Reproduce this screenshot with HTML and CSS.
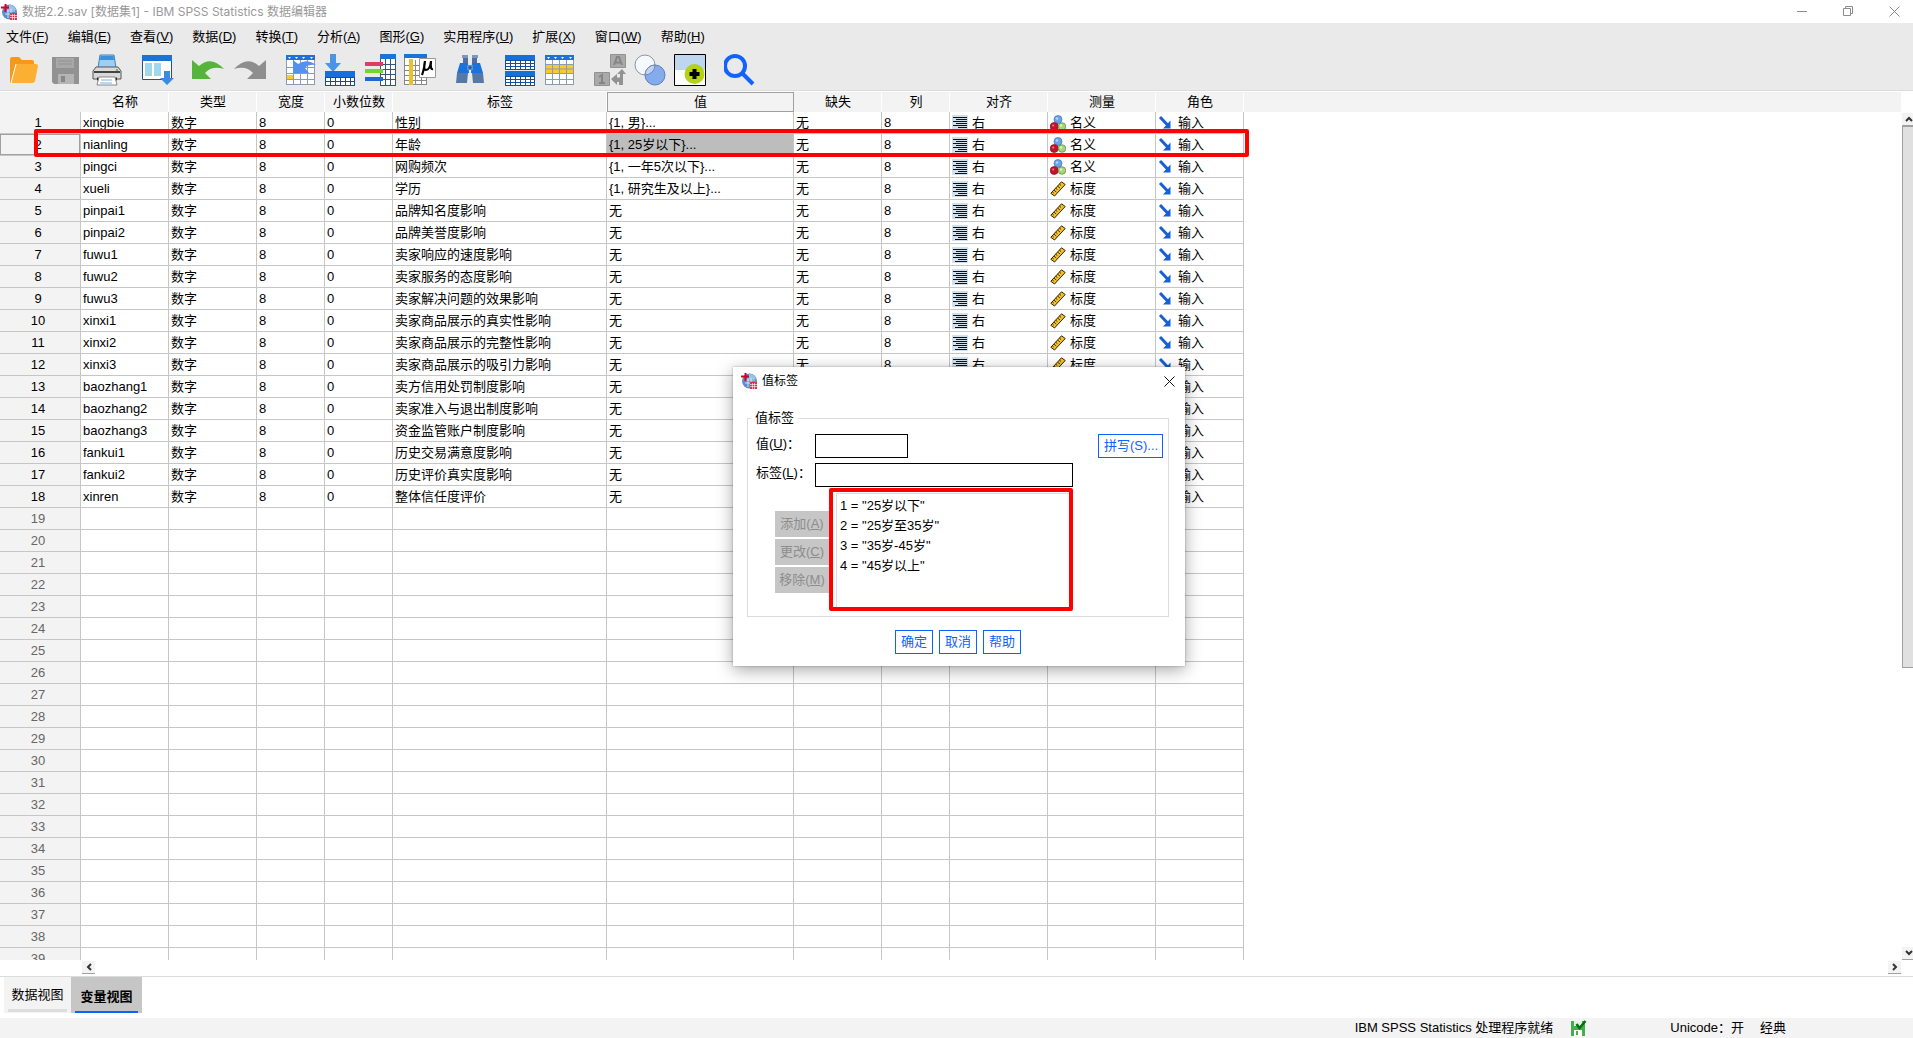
FILE: index.html
```html
<!DOCTYPE html>
<html lang="zh-CN">
<head>
<meta charset="utf-8">
<title>数据2.2.sav [数据集1] - IBM SPSS Statistics 数据编辑器</title>
<link rel="stylesheet" href="styles.css">
</head>
<body>
<svg class="sprite" aria-hidden="true">
  <symbol id="i-app" viewBox="0 0 16 16">
    <circle cx="8.500" cy="8" r="7.500" fill="#5b8fc7"/><path d="M8 1a7 7 0 0 1 7 5H8z" fill="#9cc3e6"/>
    <path d="M4 7h10M4 10h6M7 5v9M10 5v5" stroke="#fff" stroke-width=".7"/>
    <path d="M9 9h7v7H9z" fill="#d8324c"/><path d="M9 11.500h7M9 13.500h7M11.500 10v6M13.500 10v6" stroke="#fff" stroke-width=".6"/>
    <path d="M4.500 0v8M0 3.500h8" stroke="#d4002a" stroke-width="2"/>
  </symbol>
  <symbol id="i-align" viewBox="0 0 16 16">
    <path d="M0 0h16v16H0z" fill="#cfe0ee"/>
    <path d="M1 2.500h14M4 4.500h11M1 6.500h14M4 8.500h11M1 10.500h14M6 12.500h9M3 14.500h12" stroke="#111"/>
  </symbol>
  <symbol id="i-nominal" viewBox="0 0 16 16">
    <circle cx="8" cy="4.500" r="4" fill="#6ba3e8" stroke="#3f74b8" stroke-width=".7"/>
    <circle cx="4.200" cy="11.500" r="4" fill="#c4142c" stroke="#8e1020" stroke-width=".7"/>
    <circle cx="12" cy="11.500" r="3.800" fill="#a6d47c" stroke="#4f8a35" stroke-width=".7"/>
    <circle cx="7" cy="3.500" r="1.300" fill="#b5d5fa"/><circle cx="3.200" cy="10.500" r="1" fill="#ee8a92"/><circle cx="11" cy="10.500" r="1.200" fill="#dcf3c4"/>
  </symbol>
  <symbol id="i-scale" viewBox="0 0 16 16">
    <path d="M11.500 .8 15.200 3.500 4.500 15 .8 12.300z" fill="#f6c226" stroke="#2c2408" stroke-width="1"/>
    <path d="M9.500 3.200l1.600 1.300M7.700 5.200l2.300 1.800M5.800 7.300l1.600 1.300M4 9.200l2.300 1.800M2.400 11l1.400 1.100" stroke="#2c2408" stroke-width=".9"/>
  </symbol>
  <symbol id="i-input" viewBox="0 0 16 16">
    <path d="M2 2l8 8.500" stroke="#1560d8" stroke-width="3"/><path d="M12.500 5.500v8H5z" fill="#1560d8"/>
  </symbol>
</svg>

<header class="titlebar">
  <svg class="icon16"><use href="#i-app"/></svg>
  <h1 class="caption">数据2.2.sav [数据集1] - IBM SPSS Statistics 数据编辑器</h1>
  <div class="winbuttons">
    <button class="winbtn" aria-label="最小化"><svg viewBox="0 0 11 11"><path d="M0 5.500h10"/></svg></button>
    <button class="winbtn" aria-label="还原"><svg viewBox="0 0 11 11"><path d="M.5 2.500h7v7h-7zM2.500 2.500v-2h7v7h-2"/></svg></button>
    <button class="winbtn" aria-label="关闭"><svg viewBox="0 0 11 11"><path d="M.5.5l10 10M10.500.5l-10 10"/></svg></button>
  </div>
</header>

<div class="chrome">
  <nav class="menubar">
    <a href="#">文件(<u>F</u>)</a><a href="#">编辑(<u>E</u>)</a><a href="#">查看(<u>V</u>)</a><a href="#">数据(<u>D</u>)</a><a href="#">转换(<u>T</u>)</a><a href="#">分析(<u>A</u>)</a><a href="#">图形(<u>G</u>)</a><a href="#">实用程序(<u>U</u>)</a><a href="#">扩展(<u>X</u>)</a><a href="#">窗口(<u>W</u>)</a><a href="#">帮助(<u>H</u>)</a>
  </nav>
  <div class="toolbar" role="toolbar" aria-label="工具栏">
    <div class="group roomy">
      <button class="tool" aria-label="打开"><svg viewBox="0 0 32 32"><path d="M2 29V5q0-2 2-2h7l3 3h10q2 0 2 2v3z" fill="#f59a18"/><path d="M8 10h20q2 0 2 2l-3 15q-.5 2-3 2H3z" fill="#fbb034"/><path d="M8 10 3 29" stroke="#fff" stroke-width="1"/></svg></button>
      <button class="tool" aria-label="保存"><svg viewBox="0 0 32 32"><path d="M2 3h27v27H4l-2-2z" fill="#929292"/><path d="M6 4h18v10H6z" fill="#a8a8a8"/><path d="M8 7h14M8 10h14" stroke="#929292"/><path d="M8 20h16v10H8z" fill="#b4b4b4"/><path d="M11 22h4v6h-4z" fill="#888"/></svg></button>
      <button class="tool" aria-label="打印"><svg viewBox="0 0 32 32"><path d="M8 1h14l2 13H6z" fill="#9fd0f3" stroke="#3c83c0"/><path d="M8.500 2h13l.5 4H8z" fill="#3d8fd8"/><path d="M4 13h22l3 4v8H1v-8z" fill="#d9d9d9" stroke="#555"/><path d="M2 18h26" stroke="#444" stroke-width="2"/><path d="M5 25h20" stroke="#222" stroke-width="3"/><path d="M7 23h16l2 8H5z" fill="#fff" stroke="#888"/><path d="M9 26h11M8 29h12" stroke="#7fb2e0"/><circle cx="25" cy="16" r="1" fill="#2fbb2f"/></svg></button>
    </div>
    <div class="group">
      <button class="tool" aria-label="重新调用对话框"><svg viewBox="0 0 32 32"><path d="M.5 1.500h29v24H.5z" fill="#fff" stroke="#2c4f7c"/><path d="M0 1h30v6H0z" fill="#1b72d8"/><path d="M3 9h7v13H3zM12 9h7v13h-7z" fill="#9fd8ee"/><path d="M22 17h6v7h4l-7 7-7-7h4z" fill="#3b8be0"/></svg></button>
    </div>
    <div class="group roomy">
      <button class="tool" aria-label="撤消"><svg viewBox="0 0 32 32"><path d="M0 6l7 6Q19 1 32 15 20 11 13 19l6 6H0z" fill="#55b53b"/></svg></button>
      <button class="tool" aria-label="重做"><svg viewBox="0 0 32 32"><path d="M32 6l-7 6Q13 1 0 15q12-4 19 4l-6 6h19z" fill="#8e8e8e"/></svg></button>
    </div>
    <div class="group">
      <button class="tool" aria-label="转到个案"><svg viewBox="0 0 32 32"><path d="M2 2h29v29H2z" fill="#fff"/><path d="M2 13.500h29M2 19.500h29M2 25.500h29M9.500 6v25M16.500 6v25M23.500 6v25M2.500 2v29M30.500 2v29M2 30.500h29" stroke="#8b9bb2" fill="none"/><path d="M2 1h29v5H2z" fill="#1b72d8"/><path d="M4 3h3l-1.500 2zM11 3h3l-1.500 2zM18 3h3l-1.500 2zM26 3h3l-1.500 2z" fill="#fff"/><path d="M3 21h6v4H3z" fill="#f5cc2a"/><path d="M9 6l5 4q9-6 18 1-8-1-11 3l4 5H9z" fill="#5590ee"/></svg></button>
      <button class="tool" aria-label="转到变量"><svg viewBox="0 0 32 32"><path d="M6 0h6v9h5l-8 9-8-9h5z" fill="#4c94e6"/><path d="M1 17h30v15H1z" fill="#134f9a"/><path d="M1 17h30v6H1z" fill="#1670dc"/><path d="M2 24h28v7H2z" fill="#fff"/><path d="M2 27.500h28M6.500 24v7M11.500 24v7M16.500 24v7M21.500 24v7M26.500 24v7" stroke="#134f9a"/><path d="M4 14l5 4 5-4-5 4z" fill="#4c94e6"/></svg></button>
      <button class="tool" aria-label="变量"><svg viewBox="0 0 32 32"><path d="M16 0h16v32H16z" fill="#fff"/><path d="M16.500 5v27M21.500 5v27M26.500 5v27M31.500 0v32M16 10.500h16M16 15.500h16M16 20.500h16M16 25.500h16M16 31.500h16" stroke="#35557e" fill="none"/><path d="M16 0h16v5H16z" fill="#1b72d8"/><path d="M1 8h18v4H1z" fill="#e03c62"/><path d="M1 15h18v4H1z" fill="#76d42c"/><path d="M1 23h18v4H1z" fill="#2167d2"/></svg></button>
      <button class="tool" aria-label="描述统计"><svg viewBox="0 0 32 32"><path d="M0 1h23v30H0z" fill="#fff"/><path d="M0 11.500h23M0 16.500h23M0 21.500h23M0 26.500h23M.5 1v30M11.500 6v25M17.500 6v25M22.500 1v30M0 30.500h23" stroke="#888" fill="none"/><path d="M5 5h4v26H5z" fill="#ecc028"/><path d="M0 0h23v4H0z" fill="#1b72d8"/><path d="M15.500 4.500h16v19h-16z" fill="#fff" stroke="#999"/><path d="M21 7q-1 9-3 14M21 7q-2 9 1 9 4 0 5-9-1 9 2 8" stroke="#000" stroke-width="2.200" fill="none"/></svg></button>
    </div>
    <div class="group">
      <button class="tool" aria-label="查找"><svg viewBox="0 0 32 32"><path d="M8 1h6v3H8zM18 1h6v3h-6z" fill="#8197b8"/><path d="M9 4h5v5H9zM18 4h5v5h-5z" fill="#4c70a4"/><path d="M6 9h8l1 9v1H3zM18 9h8l3 10H17v-1z" fill="#1b72dc"/><path d="M13 11h6v5h-6z" fill="#5a8fd0"/><circle cx="16" cy="13.500" r="1.500" fill="#2b5b9c"/><path d="M3 19h11l-1 10H2zM18 19h11l1 10H19z" fill="#5578a8"/></svg></button>
    </div>
    <div class="group">
      <button class="tool" aria-label="拆分文件"><svg viewBox="0 0 32 32"><path d="M1 1h30v15H1zM1 17h30v15H1z" fill="#134f9a"/><path d="M1 1h30v5H1zM1 17h30v5H1z" fill="#1670dc"/><path d="M2 7h28v8H2zM2 23h28v8H2z" fill="#fff"/><path d="M2 9.500h28M2 12.500h28M2 25.500h28M2 28.500h28M6.500 7v8M11.500 7v8M16.500 7v8M21.500 7v8M26.500 7v8M6.500 23v8M11.500 23v8M16.500 23v8M21.500 23v8M26.500 23v8" stroke="#134f9a"/></svg></button>
      <button class="tool" aria-label="选择个案"><svg viewBox="0 0 32 32"><path d="M1 1h29v30H1z" fill="#fff"/><path d="M1 10h29v9H1z" fill="#f5cc2a"/><path d="M1 10.500h29M1 15h29M1 19.500h29M1 25.500h29M8.500 6v25M15.500 6v25M22.500 6v25M1.500 2v29M29.500 2v29M1 30.500h29" stroke="#8b9bb2" fill="none"/><path d="M1 1h29v5H1z" fill="#1b72d8"/><path d="M3 3h3l-1.500 2zM10 3h3l-1.500 2zM17 3h3l-1.500 2zM25 3h3l-1.500 2z" fill="#fff"/></svg></button>
    </div>
    <div class="group">
      <button class="tool" aria-label="值标签"><svg viewBox="0 0 32 32"><path d="M16.500.5h15v13h-15zM.5 18.500h15v13H.5z" fill="#a9a9a9" stroke="#929292"/><path d="M20 11l3-8h2l3 8M21.500 8.500h5" stroke="#858585" stroke-width="2" fill="none"/><path d="M5 23l3-2v8M5 29h6" stroke="#858585" stroke-width="2" fill="none"/><path d="M17 25l6-5v3.500h3V20h-3l5-5 4 5h-3v11h-4v-3h-2v3z" fill="#929292"/></svg></button>
      <button class="tool" aria-label="使用变量集"><svg viewBox="0 0 32 32"><circle cx="11" cy="11" r="10" fill="#f5f8fd" stroke="#8c95a5"/><circle cx="21" cy="21" r="10" fill="#85abef" stroke="#5e7db0"/><path d="M11 21a10 10 0 0 1 10-10 10 10 0 0 1-10 10z" fill="#c0d2f5" stroke="#7588aa"/></svg></button>
      <button class="tool" aria-label="定制工具栏"><svg viewBox="0 0 32 32"><path d="M.5.5h31v31H.5z" fill="#fff" stroke="#000"/><path d="M1 1h30v15H1z" fill="#bfd6f0"/><circle cx="20.500" cy="20" r="10" fill="#b5d217"/><path d="M20.500 15v10M15.500 20h10" stroke="#000" stroke-width="4"/></svg></button>
    </div>
    <div class="group">
      <button class="tool" aria-label="搜索"><svg viewBox="0 0 32 32"><circle cx="11" cy="12" r="10" fill="none" stroke="#1163fb" stroke-width="4"/><path d="M18 19l11 11" stroke="#1163fb" stroke-width="4"/></svg></button>
    </div>
  </div>
</div>

<main class="editor">
  <div class="gridwrap">
    <table class="grid">
      <colgroup><col class="c-num"><col class="c-88"><col class="c-88"><col class="c-68"><col class="c-68"><col class="c-label"><col class="c-values"><col class="c-88"><col class="c-68"><col class="c-align"><col class="c-measure"><col class="c-88"><col></colgroup>
      <thead><tr><th></th><th>名称</th><th>类型</th><th>宽度</th><th>小数位数</th><th>标签</th><th class="current">值</th><th>缺失</th><th>列</th><th>对齐</th><th>测量</th><th>角色</th><th></th></tr></thead>
      <tbody id="variables"></tbody>
    </table>
    <div class="mark mark-row"></div>
  </div>
  <div class="vscroll">
    <button class="arrow" aria-label="向上滚动"><svg viewBox="0 0 8 8"><path d="M1 6l3-3 3 3"/></svg></button>
    <div class="track"><div class="thumb"></div></div>
    <button class="arrow" aria-label="向下滚动"><svg viewBox="0 0 8 8"><path d="M1 2l3 3 3-3"/></svg></button>
  </div>
</main>
<div class="hscroll">
  <button class="arrow" aria-label="向左滚动"><svg viewBox="0 0 8 8"><path d="M6 1L3 4l3 3"/></svg></button>
  <button class="arrow" aria-label="向右滚动"><svg viewBox="0 0 8 8"><path d="M2 1l3 3-3 3"/></svg></button>
</div>
<div class="tabs" role="tablist">
  <button class="tab" role="tab" aria-selected="false"><span>数据视图</span></button>
  <button class="tab active" role="tab" aria-selected="true"><span>变量视图</span></button>
</div>
<footer class="status">
  <span class="st-main">IBM SPSS Statistics 处理程序就绪</span>
  <svg class="st-icon" viewBox="0 0 16 16"><path d="M0 1h14v15H0z" fill="#46ae4c"/><path d="M3 1h8v5H3z" fill="#e4f3e4"/><path d="M3 10h8v6H3z" fill="#fff"/><path d="M5 11h2v4H5z" fill="#46ae4c"/><path d="M5.500 4l3 4 6-7" fill="none" stroke="#0c6c12" stroke-width="2.500"/></svg>
  <span class="st-unicode">Unicode：开</span>
  <span>经典</span>
</footer>

<section class="dialog" role="dialog" aria-labelledby="dlg-title">
  <div class="dlg-head">
    <svg class="icon16"><use href="#i-app"/></svg>
    <h2 class="dlg-title" id="dlg-title">值标签</h2>
    <button class="dlg-close" aria-label="关闭"><svg viewBox="0 0 11 11"><path d="M.5.5l10 10M10.500.5l-10 10"/></svg></button>
  </div>
  <fieldset class="box">
    <legend>值标签</legend>
    <div class="field">
      <label for="val">值(<u>U</u>)：</label><input id="val" class="in-value" type="text">
      <button class="btn spell">拼写(S)...</button>
    </div>
    <div class="field">
      <label for="lab">标签(<u>L</u>)：</label><input id="lab" class="in-label" type="text">
    </div>
    <div class="entries">
      <div class="edits">
        <button class="edit" disabled>添加(<u>A</u>)</button>
        <button class="edit" disabled>更改(<u>C</u>)</button>
        <button class="edit" disabled>移除(<u>M</u>)</button>
      </div>
      <div class="listbox">
        <select class="list" size="5" aria-label="值标签列表">
          <option>1 = "25岁以下"</option><option>2 = "25岁至35岁"</option><option>3 = "35岁-45岁"</option><option>4 = "45岁以上"</option>
        </select>
        <div class="mark mark-list"></div>
      </div>
    </div>
  </fieldset>
  <div class="dlg-foot">
    <button class="btn">确定</button><button class="btn">取消</button><button class="btn">帮助</button>
  </div>
</section>
<script src="variables.js"></script>
</body>
</html>
```
FILE: styles.css
```css
* { box-sizing: border-box; }
body, button, input, select, table { font: 13px/20px "Liberation Sans", "Noto Sans CJK SC", sans-serif; color: #000; }
body { margin: 0; height: 100vh; display: flex; flex-direction: column; overflow: hidden; background: #fff; }
button { border: 0; padding: 0; background: none; }
h1, h2 { margin: 0; font-weight: 400; }
svg { display: block; }
.sprite { position: absolute; width: 0; height: 0; }
.icon16 { width: 16px; height: 16px; flex: none; }

.titlebar { height: 23px; flex: none; display: flex; align-items: center; gap: 5px; padding-left: 1px; }
.caption { font: 12px/20px Inter, "Noto Sans CJK SC", sans-serif; color: #999; white-space: nowrap; }
.winbuttons { margin-left: auto; display: flex; gap: 8px; }
.winbtn { width: 38px; height: 20px; display: grid; place-items: center; }
.winbtn svg { width: 11px; height: 11px; fill: none; stroke: #8c8c8c; }

.chrome { flex: none; height: 68px; background: #eaeaea; border-bottom: 1px solid #dcdcdc; }
.menubar { display: flex; gap: 19px; padding: 3px 6px 7px; }
.menubar a { color: #000; text-decoration: none; white-space: nowrap; line-height: 21px; }
.toolbar { display: flex; gap: 18px; padding-left: 8px; }
.group { display: flex; gap: 8px; }
.roomy { gap: 10px; }
.tool { width: 32px; height: 32px; }
.tool svg { width: 32px; height: 32px; }

.editor { flex: 1; min-height: 0; display: flex; padding-top: 1px; }
.gridwrap { flex: 1; position: relative; overflow: hidden; }
.grid { width: 100%; table-layout: fixed; border-collapse: separate; border-spacing: 0; }
.c-num { width: 81px; }
.c-88 { width: 88px; }
.c-68 { width: 68px; }
.c-label { width: 214px; }
.c-values { width: 187px; }
.c-align { width: 98px; }
.c-measure { width: 108px; }
.grid th { height: 20px; padding: 0; background: #f3f3f3; font-weight: 400; line-height: 18px; border: 1px solid #f3f3f3; border-right-color: #fff; }
.grid th:first-child { border-right-color: #f3f3f3; }
.grid th.current { border-color: #a0a0a0; }
.grid td { height: 22px; padding: 0 0 0 2px; line-height: 21px; border: solid #c6c6c6; border-width: 0 1px 1px 0; white-space: nowrap; overflow: hidden; }
.grid tbody td:last-child { border: 0; }
.grid .num { padding: 0 4px 0 0; text-align: center; background: #f3f3f3; }
.grid .num.unused { color: #666; }
.grid .num.selected { box-shadow: inset 0 0 0 1px #a0a0a0; }
.grid .picked { background: #bdbdbd; }
.withicon { display: flex; align-items: center; gap: 4px; height: 21px; }
.withicon svg { width: 16px; height: 16px; flex: none; }

.mark { position: absolute; border: 4px solid #f00; border-radius: 2px; pointer-events: none; }
.mark-row { left: 34px; top: 37px; width: 1215px; height: 28px; }

.vscroll { width: 11px; flex: none; display: flex; flex-direction: column; padding-top: 21px; }
.track { flex: 1; }
.thumb { height: 66%; background: #e0e0e0; border: solid #a0a0a0; border-width: 1px 0 1px 1px; }
.arrow { width: 13px; height: 13px; flex: none; background: #f3f3f3; border-bottom: 1px solid #a0a0a0; display: grid; place-items: center; }
.arrow svg { width: 8px; height: 8px; fill: none; stroke: #333; stroke-width: 2; }
.hscroll { flex: none; height: 17px; display: flex; justify-content: space-between; padding: 1px 12px 0 82px; border-bottom: 1px solid #dcdcdc; }

.tabs { flex: none; height: 41px; display: flex; padding: 0 4px 5px; }
.tab { width: 67px; padding: 9px 4px 1px; background: #f3f3f3; display: flex; }
.tab span { flex: 1; height: 26px; line-height: 18px; border-bottom: 3px solid #dedede; }
.tab.active { width: 71px; background: #c6c6c6; padding: 10px 4px 0; font-weight: 700; }
.tab.active span { line-height: 20px; border-bottom: 2px solid #0f62fe; }

.status { flex: none; height: 20px; background: #f3f3f3; display: flex; justify-content: flex-end; align-items: center; padding-right: 127px; line-height: 22px; white-space: nowrap; }
.st-icon { width: 16px; height: 16px; margin: 0 83px 0 18px; }
.st-unicode { margin-right: 16px; }

.dialog { position: absolute; left: 733px; top: 367px; width: 452px; padding: 4px 16px 12px 14px; background: #fff; box-shadow: 0 4px 16px rgba(0,0,0,.35), 0 0 2px rgba(0,0,0,.3); }
.dlg-head { display: flex; align-items: center; gap: 5px; height: 20px; margin: 0 -11px 18px -6px; }
.dlg-title { font-size: 12px; }
.dlg-close { margin-left: auto; width: 22px; height: 20px; display: grid; place-items: center; }
.dlg-close svg { width: 11px; height: 11px; fill: none; stroke: #111; }
.box { margin: 0; border: 1px solid #dcdcdc; padding: 7px 5px 8px 8px; height: 208px; }
.box legend { padding: 0 4px; margin-left: -5px; line-height: 18px; }
.field { display: flex; height: 24px; margin-bottom: 5px; }
.field label { width: 59px; line-height: 20px; white-space: nowrap; }
.field input { height: 24px; border: 1px solid #000; border-radius: 0; padding: 0 4px; background: #fff; }
.in-value { width: 93px; }
.in-label { width: 258px; }
.btn { height: 24px; padding: 0 5px; border: 1px solid #0f62fe; color: #0f62fe; background: #fff; line-height: 22px; white-space: nowrap; }
.spell { margin-left: auto; width: 65px; }
.entries { display: flex; }
.edits { width: 54px; margin-left: 19px; padding-top: 19px; display: flex; flex-direction: column; gap: 2px; }
.edit { height: 26px; background: #c6c6c6; color: #8d8d8d; white-space: nowrap; }
.listbox { position: relative; width: 244px; height: 119px; padding: 1px 0 0 7px; }
.list { width: 100%; height: 115px; border: 1px solid #dcdcdc; border-radius: 0; padding: 1px 0; background: #fff; overflow: hidden; outline: 0; }
.list option { height: 20px; padding: 0 3px; line-height: 20px; }
.mark-list { left: 0; top: -4px; width: 244px; height: 123px; }
.dlg-foot { display: flex; justify-content: center; gap: 6px; margin-top: 13px; }
.dlg-foot .btn { width: 38px; }
```
FILE: variables.js
```js
const variables = [
  ["xingbie", "性别", "{1, 男}...", "nominal"],
  ["nianling", "年龄", "{1, 25岁以下}...", "nominal"],
  ["pingci", "网购频次", "{1, 一年5次以下}...", "nominal"],
  ["xueli", "学历", "{1, 研究生及以上}...", "scale"],
  ["pinpai1", "品牌知名度影响", "无", "scale"],
  ["pinpai2", "品牌美誉度影响", "无", "scale"],
  ["fuwu1", "卖家响应的速度影响", "无", "scale"],
  ["fuwu2", "卖家服务的态度影响", "无", "scale"],
  ["fuwu3", "卖家解决问题的效果影响", "无", "scale"],
  ["xinxi1", "卖家商品展示的真实性影响", "无", "scale"],
  ["xinxi2", "卖家商品展示的完整性影响", "无", "scale"],
  ["xinxi3", "卖家商品展示的吸引力影响", "无", "scale"],
  ["baozhang1", "卖方信用处罚制度影响", "无", "scale"],
  ["baozhang2", "卖家准入与退出制度影响", "无", "scale"],
  ["baozhang3", "资金监管账户制度影响", "无", "scale"],
  ["fankui1", "历史交易满意度影响", "无", "scale"],
  ["fankui2", "历史评价真实度影响", "无", "scale"],
  ["xinren", "整体信任度评价", "无", "scale"]
];
const measures = { nominal: "名义", scale: "标度" };
const rowCount = 39;
const selectedRow = 2;

const withIcon = (icon, text) =>
  `<div class="withicon"><svg><use href="#i-${icon}"/></svg>${text}</div>`;

let html = "";
for (let n = 1; n <= rowCount; n++) {
  const v = variables[n - 1];
  const selected = n === selectedRow;
  const numClass = "num" + (v ? "" : " unused") + (selected ? " selected" : "");
  const cells = v
    ? [v[0], "数字", "8", "0", v[1], v[2], "无", "8",
       withIcon("align", "右"), withIcon(v[3], measures[v[3]]), withIcon("input", "输入")]
    : Array(11).fill("");
  html += `<tr><td class="${numClass}">${n}</td>` +
    cells.map((c, i) => `<td${selected && i === 5 ? ' class="picked"' : ""}>${c}</td>`).join("") +
    "<td></td></tr>";
}
document.getElementById("variables").innerHTML = html;
```
